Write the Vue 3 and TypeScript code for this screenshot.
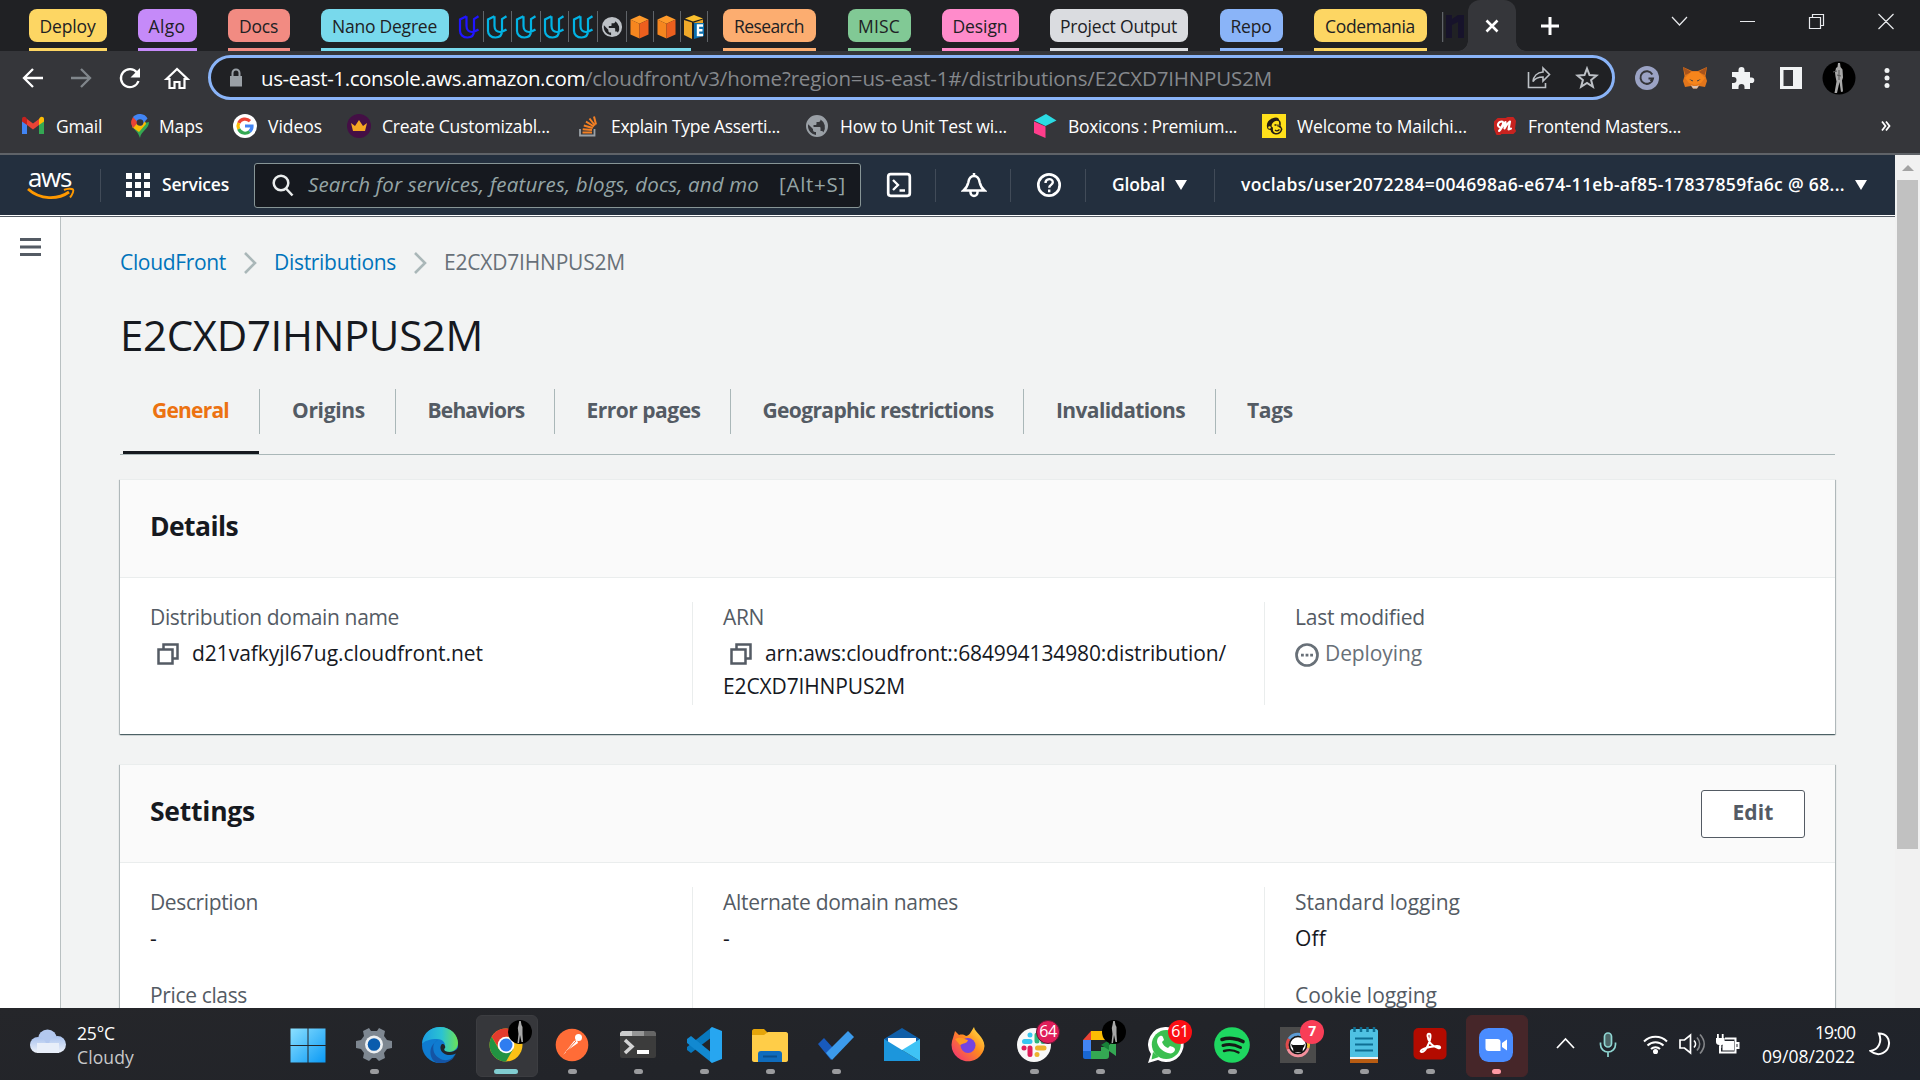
<script setup lang="ts">
import type { Directive } from 'vue'

interface Bookmark { id: string; label: string; width: number }
interface Tab { label: string; width: number; text: number; active?: boolean }

/* Tracks a label so that its text spans the given number of pixels. */
const vFit: Directive<HTMLElement, number> = {
  mounted(el, { value }) {
    const chars = (el.textContent ?? '').length
    const range = document.createRange()
    range.selectNodeContents(el)
    const natural = range.getBoundingClientRect().width
    el.style.letterSpacing = `${((value - natural) / chars).toFixed(3)}px`
  },
}

const leftGroups = [
  { id: 'deploy', label: 'Deploy', text: 56 },
  { id: 'algo', label: 'Algo', text: 37 },
  { id: 'docs', label: 'Docs', text: 39 },
]
const rightGroups = [
  { id: 'research', label: 'Research', text: 70 },
  { id: 'misc', label: 'MISC', text: 42 },
  { id: 'design', label: 'Design', text: 55 },
  { id: 'project', label: 'Project Output', text: 117 },
  { id: 'repo', label: 'Repo', text: 41 },
  { id: 'codemania', label: 'Codemania', text: 90 },
]
const bookmarks: Bookmark[] = [
  { id: 'gmail', label: 'Gmail', width: 46 },
  { id: 'maps', label: 'Maps', width: 44 },
  { id: 'google', label: 'Videos', width: 54 },
  { id: 'crown', label: 'Create Customizabl...', width: 168 },
  { id: 'stack', label: 'Explain Type Asserti...', width: 169 },
  { id: 'globe', label: 'How to Unit Test wi...', width: 167 },
  { id: 'box', label: 'Boxicons : Premium...', width: 169 },
  { id: 'chimp', label: 'Welcome to Mailchi...', width: 170 },
  { id: 'masters', label: 'Frontend Masters...', width: 153 },
]
const tabs: Tab[] = [
  { label: 'General', width: 140, text: 77, active: true },
  { label: 'Origins', width: 136, text: 73 },
  { label: 'Behaviors', width: 159, text: 97 },
  { label: 'Error pages', width: 176, text: 114 },
  { label: 'Geographic restrictions', width: 293, text: 231 },
  { label: 'Invalidations', width: 192, text: 129 },
  { label: 'Tags', width: 108, text: 46 },
]
const apps = ['windows', 'settings', 'edge', 'chrome', 'postman', 'terminal', 'vscode', 'files', 'todo', 'mail',
  'firefox', 'slack', 'meet', 'whatsapp', 'spotify', 'camera', 'notepad', 'acrobat', 'zoom']
const idle = ['windows', 'edge', 'mail', 'firefox']
const counts: Record<string, string> = { slack: '64', whatsapp: '61', camera: '7' }
</script>

<template>
  <div class="desktop">
    <header class="strip">
      <div v-for="g in leftGroups" :key="g.id" class="group" :class="g.id"><span class="pill"><span v-fit="g.text">{{ g.label }}</span></span></div>
      <div class="group nano">
        <span class="pill"><span v-fit="105">Nano Degree</span></span>
        <div class="minis">
          <span v-for="n in 5" :key="n" class="mini" :class="{ first: n === 1 }">
            <svg width="22" height="24" viewBox="0 0 22 24" fill="none" stroke-width="2.200"><path d="M8.500 1.200 2 4.500V16c0 3.500 3 6.500 7.500 6.500S16 20 16 16V4l4.500-2.800M8.500 1.200V11c0 4 2.500 6 5.500 6 2.500 0 4-1 6.500-2.500" /></svg>
          </span>
          <span class="mini wide"><svg width="22" height="22" viewBox="0 0 24 24"><path fill="#bdc1c6" d="M12 1a11 11 0 1 0 0 22 11 11 0 0 0 0-22m-1 19.900C6.500 20.400 3 16.600 3 12c0-.6.100-1.200.2-1.800L8 15v1c0 1.100.9 2 2 2h1zM18.400 18.400c-.3-.8-1-1.400-1.900-1.400h-1v-3c0-.6-.4-1-1-1h-6v-2h2c.6 0 1-.4 1-1V8h2c1.100 0 2-.9 2-2v-.4A9 9 0 0 1 18.400 18.400" /></svg></span>
          <span v-for="n in 2" :key="'c' + n" class="mini cube"><svg width="19" height="24" viewBox="0 0 20 24"><path fill="#ff9a2b" d="m10 0 9.500 4-9.500 4.500L.5 4z" /><path fill="#f6861f" d="M.5 4 10 8.500V24L.5 20z" /><path fill="#ec5f1e" d="M19.500 4 10 8.500V24l9.500-4z" /></svg></span>
          <span class="mini cube"><svg width="20" height="24" viewBox="0 0 20 24"><path fill="#fbc02d" d="m10 0 9 3.500L9 6.500 1 3.500z" /><path fill="#efa92a" d="m0 5 8 2.500V24l-8-4z" /><path fill="#e8a325" d="M9 8 19 4.500V8H9z" /><path fill="#0b6fae" d="M10 8h10v13l-10 3z" /><path fill="none" stroke="#fff" stroke-width="2.400" d="M19 10.500h-5v9.500h5M14 15.200h4.500" /></svg></span>
        </div>
      </div>
      <div v-for="g in rightGroups" :key="g.id" class="group" :class="g.id"><span class="pill"><span v-fit="g.text">{{ g.label }}</span></span></div>
      <svg class="ntab" width="26" height="32" viewBox="0 0 26 32"><path d="M.5 1v30" stroke="#5f6368" stroke-width="1.500" /><path fill="#17132b" d="M4 4h6v4l6-4h6v23h-6V11l-6 3v13H4z" /></svg>
      <div class="current"><svg width="14" height="14" viewBox="0 0 14 14"><path d="m1.500 1.500 11 11m0-11-11 11" stroke="#fff" stroke-width="2.600" /></svg></div>
      <svg class="plus" width="20" height="20" viewBox="0 0 20 20"><path d="M10 1v18M1 10h18" stroke="#fff" stroke-width="3" /></svg>
      <svg class="controls" width="224" height="20" viewBox="0 0 224 20" fill="none" stroke="#e8eaed" stroke-width="1.200"><path d="m1 5 7.500 8L16 5M69 9.500h15M138.500 5.500h11v11h-11zM141.500 5V2.500h11v11H150M207.500 2l15 15m0-15-15 15" /></svg>
    </header>

    <div class="toolbar">
      <svg class="nav-icons" width="168" height="24" viewBox="0 0 168 24" fill="none" stroke="#fff" stroke-width="2.300">
        <path d="M21 12H2m9-9-9 9 9 9" /><path stroke="#80868b" d="M49 12h19m-9-9 9 9-9 9" />
        <path d="M115 6.500A9 9 0 1 0 116.500 15" /><path fill="#fff" stroke="none" d="M118 2v9.500h-9.500z" />
        <path d="m144.500 13 10.500-10 10.500 10h-3v9h-5v-6h-5v6h-5v-9z" stroke-width="2.200" />
      </svg>
      <div class="omnibox">
        <svg class="lock" width="14" height="20" viewBox="0 0 14 20"><path fill="#9aa0a6" d="M1 8h12v10.500H1z" /><path d="M3.500 9V5a3.500 3.500 0 0 1 7 0v4" fill="none" stroke="#9aa0a6" stroke-width="2" /></svg>
        <span class="host" v-fit="324">us-east-1.console.aws.amazon.com</span><span class="path" v-fit="687">/cloudfront/v3/home?region=us-east-1#/distributions/E2CXD7IHNPUS2M</span>
        <svg class="share" width="24" height="24" viewBox="0 0 24 24" fill="none" stroke="#bdc1c6" stroke-width="1.600"><path d="M1.500 6v15.500h17V17M16 2l6.500 6.500L16 15v-4c-5 0-8 1.500-10 4.500.5-5 4-9 10-9.500z" /></svg>
        <svg class="star" width="24" height="24" viewBox="0 0 24 24" fill="none" stroke="#bdc1c6" stroke-width="2"><path d="m12 2.500 2.500 6.600 7 .4-5.400 4.500 1.800 6.800-5.900-3.900-5.900 3.900 1.800-6.800L2.500 9.500l7-.4z" /></svg>
      </div>
      <div class="extensions">
        <svg width="24" height="24" viewBox="0 0 24 24"><circle cx="12" cy="12" r="12" fill="#9ba3c4" /><path d="M17.300 8.500A6.300 6.300 0 1 0 18 12.500h-4.500M15.500 15.500l2.500-3" fill="none" stroke="#35363a" stroke-width="2" /></svg>
        <svg width="24" height="24" viewBox="0 0 24 24"><path fill="#e2761b" d="m0 1 9 4h6l9-4-1.500 9 1.500 5-2 6-6-1-2 2.500h-4L8 20l-6 1-2-6 1.500-5z" /><path fill="#a8541c" d="m0 1 8.500 5-6 3zM24 1l-8.500 5 6 3z" /><path fill="#f6851b" d="m8 6-6 6 4 5 6 2 6-2 4-5-6-6z" /><path fill="#233447" d="m6 13 4 1.500-.5 1zM18 13l-4 1.500.5 1zM10 20h4l-.5 1.500h-3z" /><path fill="#d7c1b3" d="m8 19 2 1h4l2-1-2 3.500h-4z" /></svg>
        <svg width="24" height="24" viewBox="0 0 24 24"><path fill="#f1f3f4" d="M1 6h6.500V4a3 3 0 0 1 6 0v2H19v5.500h1.500a2.800 2.800 0 0 1 0 5.600H19V23h-5.500v-2a3 3 0 0 0-6 0v2H1v-6h1.500a3 3 0 0 0 0-6H1z" /></svg>
        <svg width="24" height="24" viewBox="0 0 24 24"><path fill="#f1f3f4" fill-rule="evenodd" d="M1 1h22v22H1zm3.500 3v16H14V4z" /></svg>
        <svg class="avatar" width="34" height="34" viewBox="0 0 34 34"><circle cx="17" cy="17" r="16.500" fill="#000" /><path fill="#a8a8a8" d="M16 2h2l.5 4 2 2.500.5 8-1 3 1 11-2 .5-1.500-10-2.500 11h-2.500l2-11.500-1-5-.5-4 1-4.500 1.500-1z" /><path d="m11 11 4-1M17 9v10M15 14l4 1" stroke="#555" /></svg>
        <svg class="more" width="8" height="24" viewBox="0 0 8 24"><g fill="#f1f3f4"><circle cx="4" cy="4.500" r="2.500" /><circle cx="4" cy="12" r="2.500" /><circle cx="4" cy="19.500" r="2.500" /></g></svg>
      </div>
    </div>

    <nav class="bookmarks">
      <div v-for="b in bookmarks" :key="b.id" class="bookmark" :class="b.id">
        <svg width="24" height="24" viewBox="0 0 24 24">
          <g v-if="b.id === 'gmail'"><path fill="#4285f4" d="M1 6v14h5V10z" /><path fill="#34a853" d="M18 10v10h5V6z" /><path fill="#fbbc04" d="M18 5v6l5-3.500V5c0-2-2.500-3-4-1.500z" /><path fill="#ea4335" d="m6 5 6 4.600L18 5v6l-6 4.500L6 11z" /><path fill="#c5221f" d="M1 5v2.500L6 11V5L5 3.500C3.500 2 1 3 1 5" /></g>
          <g v-else-if="b.id === 'maps'"><path fill="#34a853" d="M4 12c2 4 6 5 8 12 1-7 9-9 9-16z" /><path fill="#fbbc04" d="m4 13 12-9 2 6-7 8z" /><path fill="#ea4335" d="M5 3 3.200 7c-.5 3 .5 4.500 2 7l6-7z" /><path fill="#4285f4" d="M5 3c4-4.500 12-4 14.500 1.500L13 12z" /><circle cx="12" cy="8.500" r="3.300" fill="#35363a" /></g>
          <g v-else-if="b.id === 'google'"><circle cx="12" cy="12" r="12" fill="#fff" /><g fill="none" stroke-width="3.200"><path stroke="#ea4335" d="M17 7.200A7 7 0 0 0 5.700 9" /><path stroke="#fbbc05" d="M5.700 9a7 7 0 0 0 0 6" /><path stroke="#34a853" d="M5.700 15a7 7 0 0 0 11 2.500" /><path stroke="#4285f4" d="M16.700 17.500A7 7 0 0 0 19 12h-7" /></g></g>
          <g v-else-if="b.id === 'crown'"><circle cx="12" cy="12" r="12" fill="#440f45" /><path fill="#f5a623" d="m4 9 4 3 4-6 4 6 4-3-2 8H6z" /></g>
          <g v-else-if="b.id === 'stack'" fill="none"><path stroke="#9aa0a6" stroke-width="1.800" d="M4 15v6.500h14.500V15" /><path stroke="#f48024" stroke-width="2" d="M6.500 18.500H16M6.700 15.200l9.300.8M7.800 11.500l9 2.500M10 7.700l8 4.800M13.500 4.500l5.500 7M18 2.500l2 8" /></g>
          <path v-else-if="b.id === 'globe'" fill="#9aa0a6" d="M12 1a11 11 0 1 0 0 22 11 11 0 0 0 0-22m-1 19.900C6.500 20.400 3 16.600 3 12c0-.6.100-1.200.2-1.800L8 15v1c0 1.100.9 2 2 2h1zM18.400 18.400c-.3-.8-1-1.400-1.900-1.400h-1v-3c0-.6-.4-1-1-1h-6v-2h2c.6 0 1-.4 1-1V8h2c1.100 0 2-.9 2-2v-.4A9 9 0 0 1 18.400 18.400" />
          <g v-else-if="b.id === 'box'"><path fill="#2bdbe3" d="m13 0 10.500 6.500-11 5.500L1 6.500z" /><path fill="#ff3d8b" d="m1 7.500 11.500 5V24L1 19z" /></g>
          <g v-else-if="b.id === 'chimp'"><path fill="#ffe01b" d="M0 0h24v24H0z" /><path fill="#241c15" d="M5 13C4 8 8 4 14 3.500c2 0 3 1 3 2.500 2 1 2 4 1.500 6 1 .5 1 2 2 3-1 4-4 6-7 5.500-3-.3-4.500-2-5-4.500-2 0-3.500-1-3.500-3" /><path fill="#ffe01b" d="M10 10c2-3 5-4 7-2.500l.3 4.500-1.300.5 2.800 2c.2 3-2.800 5-5.300 4.500-2.500-.5-3-3-2.500-5.500-1 0-2-1-1-3.500" /><circle cx="7.500" cy="13.500" r="1.300" fill="#ffe01b" /><path stroke="#241c15" stroke-width="1.300" fill="none" d="M12.500 11h2M16 10.500v2M13 16c1.500 1.500 3 1 4.500-.5M7 8.500c2-2 4-3 7-3" /></g>
          <g v-else><path fill="#c8231f" stroke="#c8231f" stroke-width="2" stroke-linejoin="round" d="M5 5h8l2-1h5l2 3-1 8 1 2-2 2H8l-1 1H4l-2-5V8z" /><path fill="none" stroke="#fff" stroke-width="2.100" stroke-linecap="round" stroke-linejoin="round" d="M6.500 13C3.500 12 5 7.500 9 7.500c2.500 0 .5 5-3 9.500 2-1 4-6.500 6.500-9l-1 6.500c2-3.500 3.500-6 5.500-7l-1.500 8c1 0 1.500-.5 2.500-1" /></g>
        </svg>
        <span v-fit="b.width">{{ b.label }}</span>
      </div>
      <svg class="overflow" width="10" height="12" viewBox="0 0 10 12"><path d="m1 1.500 3.500 4.500L1 10.500M5 1.500 8.500 6 5 10.500" fill="none" stroke="#fff" stroke-width="1.800" /></svg>
    </nav>

    <div class="viewport">
      <div class="page">
        <div class="aws-bar">
          <div class="logo">
            <span v-fit="43">aws</span>
            <svg width="48" height="14" viewBox="0 0 48 14"><path d="M1 2c12 11 30 11 41 3" fill="none" stroke="#f90" stroke-width="2.800" /><path d="M37 3c3-1.500 8-1.500 9-.5s-.5 5-3 8" fill="none" stroke="#f90" stroke-width="2" /></svg>
          </div>
          <i class="rule r1"></i>
          <svg class="apps-grid" width="24" height="24" viewBox="0 0 24 24" fill="#fff"><path d="M0 0h6v6H0zm9 0h6v6H9zm9 0h6v6h-6zM0 9h6v6H0zm9 0h6v6H9zm9 0h6v6h-6zM0 18h6v6H0zm9 0h6v6H9zm9 0h6v6h-6z" /></svg>
          <span class="services" v-fit="67">Services</span>
          <div class="search">
            <svg width="22" height="23" viewBox="0 0 22 23" fill="none" stroke="#eaeded" stroke-width="2.500"><circle cx="9" cy="9" r="7.300" /><path d="m14 14.500 6.500 7" /></svg>
            <em v-fit="451">Search for services, features, blogs, docs, and mo</em>
            <span v-fit="67">[Alt+S]</span>
          </div>
          <svg class="shell" width="26" height="26" viewBox="0 0 26 26" fill="none" stroke="#fff" stroke-width="2.700"><rect x="2.200" y="2.200" width="21.600" height="21.600" rx="2.500" /><path d="m7 8 5 5-5 5M13.500 18.500H19" stroke-width="2.300" /></svg>
          <i class="rule r2"></i>
          <svg class="bell" width="26" height="26" viewBox="0 0 26 26" fill="none" stroke="#fff" stroke-width="2.500"><path d="M2.500 18.500C5.500 16 6.500 14 7.300 10.500 8 6 10 4 13 4s5 2 5.700 6.500c.8 3.500 1.800 5.500 4.800 8zM13 4V1M9.500 19.500v1a3.500 3.500 0 0 0 7 0v-1" /></svg>
          <i class="rule r3"></i>
          <svg class="help" width="26" height="26" viewBox="0 0 26 26" fill="none" stroke="#fff" stroke-width="2.700"><circle cx="13" cy="13" r="10.700" /><path d="M9.500 11c0-5 7.300-5 7.300-.8 0 2.700-3.600 2.600-3.600 5.500M13.200 17.500v2.700" stroke-width="2.400" /></svg>
          <i class="rule r4"></i>
          <span class="region" v-fit="53">Global</span><i class="caret"></i>
          <i class="rule r5"></i>
          <span class="account" v-fit="604">voclabs/user2072284=004698a6-e674-11eb-af85-17837859fa6c @ 68...</span><i class="caret"></i>
        </div>

        <div class="body">
          <aside><svg width="22" height="18" viewBox="0 0 22 18"><path fill="#545b64" d="M0 0h21v3H0zm0 7.500h21v3H0zM0 15h21v3H0z" /></svg></aside>
          <main>
            <div class="crumbs">
              <a v-fit="106">CloudFront</a>
              <svg width="14" height="22" viewBox="0 0 14 22"><path d="m2 1 10 10L2 21" fill="none" stroke="#aab7b8" stroke-width="2.600" /></svg>
              <a class="second" v-fit="122">Distributions</a>
              <svg width="14" height="22" viewBox="0 0 14 22"><path d="m2 1 10 10L2 21" fill="none" stroke="#aab7b8" stroke-width="2.600" /></svg>
              <span v-fit="181">E2CXD7IHNPUS2M</span>
            </div>
            <h1><span v-fit="363">E2CXD7IHNPUS2M</span></h1>
            <div class="tabs">
              <div v-for="t in tabs" :key="t.label" class="tab" :class="{ active: t.active }" :style="{ width: t.width + 'px' }"><span v-fit="t.text">{{ t.label }}</span></div>
            </div>

            <section class="card details">
              <div class="card-head"><h2 v-fit="88">Details</h2></div>
              <div class="columns">
                <div class="col">
                  <label v-fit="249">Distribution domain name</label>
                  <p><svg class="copy" width="22" height="22" viewBox="0 0 22 22" fill="none" stroke="#545b64" stroke-width="2.500"><path d="M1.500 6.500h14v14h-14zM6.500 6V1.500h14v14H16" /></svg><span v-fit="291">d21vafkyjl67ug.cloudfront.net</span></p>
                </div>
                <div class="col">
                  <label v-fit="41">ARN</label>
                  <p><svg class="copy" width="22" height="22" viewBox="0 0 22 22" fill="none" stroke="#545b64" stroke-width="2.500"><path d="M1.500 6.500h14v14h-14zM6.500 6V1.500h14v14H16" /></svg><span v-fit="461">arn:aws:cloudfront::684994134980:distribution/</span></p>
                  <p class="wrap"><span v-fit="182">E2CXD7IHNPUS2M</span></p>
                </div>
                <div class="col">
                  <label v-fit="130">Last modified</label>
                  <p class="pending"><svg width="24" height="24" viewBox="0 0 24 24"><circle cx="12" cy="12" r="10.500" fill="none" stroke="#687078" stroke-width="2.700" /><path fill="#687078" d="M6 10.700h2.800v2.800H6zm4.600 0h2.800v2.800h-2.800zm4.600 0H18v2.800h-2.800z" /></svg><span v-fit="97">Deploying</span></p>
                </div>
              </div>
            </section>

            <section class="card settings-card">
              <div class="card-head"><h2 v-fit="105">Settings</h2><button><span v-fit="41">Edit</span></button></div>
              <div class="columns">
                <div class="col"><label v-fit="108">Description</label><p>-</p><label class="later" v-fit="97">Price class</label></div>
                <div class="col"><label v-fit="235">Alternate domain names</label><p>-</p></div>
                <div class="col"><label v-fit="165">Standard logging</label><p><span v-fit="31">Off</span></p><label class="later" v-fit="142">Cookie logging</label></div>
              </div>
            </section>
          </main>
        </div>
      </div>
      <div class="scrollbar"><i class="up"></i><i class="thumb"></i></div>
    </div>

    <footer class="taskbar">
      <div class="weather">
        <svg width="38" height="26" viewBox="0 0 38 26"><defs><linearGradient id="cl" x2="0" y2="1"><stop stop-color="#a9c2ee" /><stop offset="1" stop-color="#eef2fa" /></linearGradient></defs><circle cx="18.500" cy="10" r="9.500" fill="#b3c8ef" /><circle cx="9" cy="16" r="8" fill="url(#cl)" /><circle cx="28.500" cy="15.500" r="8.500" fill="url(#cl)" /><path fill="#e8eef9" d="M8 14h22v10H8z" /></svg>
        <div><span v-fit="38">25°C</span><span class="sky" v-fit="57">Cloudy</span></div>
      </div>
      <div class="apps">
        <div v-for="a in apps" :key="a" class="app" :class="[a, { idle: idle.includes(a) }]">
          <svg width="36" height="36" viewBox="0 0 36 36">
            <g v-if="a === 'windows'"><defs><linearGradient id="w" x2="1" y2="1"><stop stop-color="#8be0ff" /><stop offset="1" stop-color="#0a99f5" /></linearGradient></defs><path fill="url(#w)" d="M.5 1.500h17V18H.5zm18 0h17V18h-17zM.5 19h17v16.500H.5zm18 0h17v16.500h-17z" /></g>
            <g v-else-if="a === 'settings'"><path fill="#7e8791" d="m13 1 2 3h6l2-3 6 3-1 5 3 4 5 1v7l-5 1-3 4 1 5-6 3-3-3h-4l-3 3-6-3 1-5-3-4-5-1v-7l5-1 3-4-1-5z" /><circle cx="18" cy="17.500" r="9" fill="#eef0f2" /><circle cx="18" cy="17.500" r="6.300" fill="#0b5cad" /></g>
            <g v-else-if="a === 'edge'"><defs><linearGradient id="e" x2="1"><stop stop-color="#1b9de2" /><stop offset=".55" stop-color="#2bc3d2" /><stop offset="1" stop-color="#6be257" /></linearGradient></defs><circle cx="18" cy="18" r="18" fill="#0f7bd0" /><path fill="url(#e)" d="M0 17C1 5 10 0 18 0c11 0 18 8 18 16 0 6-5 9-9 9-5 0-7-2-5-4 3-4-1-9-7-9-7 0-13 2-15 5" /><path fill="#1454a4" d="M16 13c-6 2-7 13 1 18 6 4 12 2 16-2-3 5-10 8-17 7C8 35 4 20 16 13" /><path fill="#222428" d="M20 17c-4 4 0 11 8 11 3 0 6-1 7.500-2.500L37 19c-2 4-6 6-9 6-5 0-7-2-5-4 1-1.500-1-4-2-4" /></g>
            <g v-else-if="a === 'chrome'"><circle cx="18" cy="18" r="16.500" fill="#fbc116" /><path fill="#e33b2e" d="M3.700 9.800A16.500 16.500 0 0 1 32.300 9.800H18l-7 12z" /><path fill="#229342" d="M3.700 9.800A16.500 16.500 0 0 0 18 34.500l7.200-12.400-14.400 0z" /><circle cx="18" cy="18" r="8.300" fill="#fff" /><circle cx="18" cy="18" r="6.500" fill="#2f7df0" /></g>
            <g v-else-if="a === 'postman'"><circle cx="18" cy="18" r="16.300" fill="#ff6c37" /><path d="m9 28 11-14 3-1 1 3-10 7z" fill="#fff" /><circle cx="24.500" cy="10.500" r="3.500" fill="#fff" /><path d="m12 25 10-11" stroke="#ff6c37" /></g>
            <g v-else-if="a === 'terminal'"><rect y="4" width="36" height="27" rx="2" fill="#3c3c3c" /><path fill="#ccc" d="M2 4h10v5H0V6z" /><path fill="#969696" d="M12 4h12v5H12z" /><path fill="#666" d="M24 4h10l2 2v3H24z" /><path d="m5 13 7 6.500L5 26" fill="none" stroke="#d5d5d5" stroke-width="3.500" /><path fill="#fff" d="M17 23h12v4H17z" /></g>
            <g v-else-if="a === 'vscode'"><path fill="#0879bf" d="M26 0v10L5 26l-4-3v-3z" /><path fill="#1289d1" d="m1 12 4-3 21 17v10L1 16z" /><path fill="#27a6f0" d="m26 0 10 4v28l-10 4-2-2V2z" /></g>
            <g v-else-if="a === 'files'"><path fill="#e5a50a" d="M0 4c0-1 1-2 2-2h10l4 4h18v10H0z" /><path fill="#ffcd48" d="M0 8h12l4-3h18c1 0 2 1 2 2v26c0 1-1 2-2 2H2c-1 0-2-1-2-2z" /><path fill="#0f6cbd" d="M6 35V27c0-2 1-3 3-3h18c2 0 3 1 3 3v8z" /><path d="M11 29.500h14" stroke="#0a4f8c" stroke-width="2" /></g>
            <g v-else-if="a === 'todo'"><path fill="#185abd" d="m0 17 6-6 9 10-2 12z" /><path fill="#3c9bec" d="M30 4 36 10 14 33 8 26z" /></g>
            <g v-else-if="a === 'mail'"><path fill="#0f5ea8" d="m0 12 18-11 18 11v5H0z" /><path fill="#fff" d="M4 11h28v12H4z" /><path fill="#1c96dc" d="m0 12 36 22H0z" /><path fill="#3fc3f5" d="M36 12v22L18 23z" /></g>
            <g v-else-if="a === 'firefox'"><defs><linearGradient id="f" x1="1" x2="0" y2="1"><stop stop-color="#fff04a" /><stop offset=".45" stop-color="#ff8a1f" /><stop offset="1" stop-color="#f0257f" /></linearGradient></defs><path fill="url(#f)" d="M24 0c1 6 10 9 10.500 19A16.500 16.500 0 1 1 3 11l2-7 4 4c3-1 6 0 7 1 3 0 5-4 8-9" /><circle cx="18" cy="18.500" r="7.500" fill="#7543e0" /><path fill="#ff9a22" d="M5 12c6-3 9 0 13 1-1 4-5 3-8 5z" /></g>
            <g v-else-if="a === 'slack'"><circle cx="18" cy="18" r="17" fill="#f8f8f8" /><g stroke-width="5" stroke-linecap="round"><path stroke="#36c5f0" d="M8.500 14.500H14M14 8v.1" /><path stroke="#2eb67d" d="M21 8v6M27 14.500h.1" /><path stroke="#ecb22e" d="M21.500 21H28M21 27.500v.1" /><path stroke="#e01e5a" d="M14 21v6.500M8 21h.1" /></g></g>
            <g v-else-if="a === 'meet'"><path fill="#ea4335" d="m1 13 8-9v9z" /><path fill="#fbbc04" d="M9 4h17v9H9z" /><path fill="#4285f4" d="M1 13h8v11H1z" /><path fill="#1967d2" d="M1 24h8v8H3c-1 0-2-1-2-2z" /><path fill="#34a853" d="M9 24h10v-4h8v9c0 2-1 3-3 3H9zM27 18l7-6v17l-7-5z" /><path fill="#188038" d="m19 18 8-5v10z" /></g>
            <g v-else-if="a === 'whatsapp'"><path fill="#fff" d="M18 0a17.500 17.500 0 1 1-8 33L0 36l3-9A17.500 17.500 0 0 1 18 0" /><circle cx="18.300" cy="17.500" r="14.500" fill="#3bbf50" /><path fill="#3bbf50" d="m5 25-1.500 7.500L11 30z" /><path fill="#fff" d="M12 9c2-1 3 0 4 4l-2 2c1 3 3 5 6 6l2-2c4 1 5 2 5 4-1 3-4 4-7 3-6-2-10-6-11-11 0-3 1-5 3-6" /></g>
            <g v-else-if="a === 'spotify'"><circle cx="18" cy="18" r="17.800" fill="#1ed760" /><path fill="none" stroke="#151b17" stroke-linecap="round" d="M8 12.500c6-2 15-1.500 21 2" stroke-width="3.600" /><path fill="none" stroke="#151b17" stroke-linecap="round" d="M9 18.500c6-2 12-1 17.500 2" stroke-width="3" /><path fill="none" stroke="#151b17" stroke-linecap="round" d="M10 24c5-1.500 10-1 14.500 1.500" stroke-width="2.400" /></g>
            <g v-else-if="a === 'camera'"><path fill="#4b4b4b" d="M0 0h36v36H0z" /><g fill="none" stroke-width="3"><path stroke="#5b9bd5" d="M9 12a10.500 10.500 0 0 1 17-1" /><path stroke="#f2c230" d="M26 11a10.500 10.500 0 0 1 2 10" /><path stroke="#f4909c" d="M28 21a10.500 10.500 0 0 1-20 1" /><path stroke="#e04a4a" d="M8 22a10.500 10.500 0 0 1 1-10" /></g><circle cx="18" cy="18" r="8.500" fill="#fff" stroke="#111" stroke-width="1.500" /><path fill="#111" d="m11 17 2 1h10l2-1-1 3-1 1-.5 4h-9l-.5-4-1-1z" /></g>
            <g v-else-if="a === 'notepad'"><path fill="#b85c12" d="M4 31h28v5H4z" /><path fill="#f4f4f4" d="M4 29h28v3H4z" /><path fill="#4fc1e2" d="M4 4c0-1 1-2 2-2h24c1 0 2 1 2 2v26H4z" /><path d="M9 11.500h18M9 17.500h18M9 23.500h18" stroke="#0e6f93" stroke-width="2" /><path d="M8.500 0v5M15 0v5M21.500 0v5M28 0v5" stroke="#0e6f93" stroke-width="2.500" /></g>
            <g v-else-if="a === 'acrobat'"><rect x="1.500" y="1" width="33" height="31.500" rx="5" fill="#b30b00" /><path d="M9 25c-2-2 5-5 16-6 4 0 4 3 1 2-5-1-10-6-10.500-12 0-3 3-3 3 0 0 5-5 17-9.500 16" fill="none" stroke="#fff" stroke-width="2" /></g>
            <g v-else><rect x="1" y="1" width="34" height="34" rx="9.500" fill="#4a8cff" /><path fill="#fff" d="M7.500 12h12c2 0 3 1 3 3v9h-12c-2 0-3-1-3-3zM24 16l5-3.500v11L24 20z" /></g>
          </svg>
          <svg v-if="a === 'chrome' || a === 'meet'" class="badge face" width="24" height="24" viewBox="0 0 24 24"><circle cx="12" cy="12" r="12" fill="#000" /><path fill="#a8a8a8" d="M11.200 1h1.600l.7 4 1 2v7l.5 8h-1.500L12 15l-1 8H9.500l1-9-.7-6 .7-3z" /></svg>
          <span v-if="counts[a]" class="badge">{{ counts[a] }}</span>
        </div>
      </div>
      <div class="tray">
        <svg class="icons" width="184" height="26" viewBox="0 0 184 26" fill="none" stroke="#fff" stroke-width="1.700">
          <path d="m1 17 8.500-9L18 17" />
          <g stroke="#8fd6d2"><rect x="48.500" y="2" width="7" height="14" rx="3.500" fill="#4c6566" /><path d="M44.500 11.500v2a7.500 7.500 0 0 0 15 0v-2M52 21v5" /></g>
          <path d="M88 10.500a16.500 16.500 0 0 1 23 0M91.500 14.500a11.500 11.500 0 0 1 16 0M95 18a6.500 6.500 0 0 1 9 0" stroke-width="2" /><circle cx="99.500" cy="20.500" r="1.700" fill="#fff" />
          <path d="M124 9h4.500l6-5v18l-6-5H124zM138 9.500c2 2 2 5 0 7" /><path stroke="#85878a" d="M141 6.500c3.500 4 3.500 9 0 13M144 3.500c5.500 6 5.500 13 0 19" />
          <path d="M169 7.500h10.500v14H164V15M179.500 12h3v5h-3" stroke-width="2" /><path fill="#fff" stroke="none" d="M168 10h10v9.500h-11.500V15zM161 3h1.800v4h3V3h1.800v4h1v4c0 2-1.500 3-3.300 3v3h-2v-3c-1.800 0-3.300-1-3.300-3V7h1z" />
        </svg>
        <div class="clock"><span v-fit="40">19:00</span><span v-fit="93">09/08/2022</span></div>
        <svg class="moon" width="22" height="24" viewBox="0 0 22 24"><path d="M10 1.500c8 0 10.500 6 10 10.500-.6 8-10 14-18.500 7 8-1.500 12-9 8.500-17.500z" fill="none" stroke="#fff" stroke-width="2" /></svg>
      </div>
    </footer>
  </div>
</template>

<style>
body { margin: 0; overflow: hidden; background: #202124; }
</style>

<style scoped>
* { box-sizing: border-box; }
.desktop { width: 1920px; height: 1080px; display: flex; flex-direction: column; overflow: hidden; font-family: "Open Sans", "Noto Sans", sans-serif; }
.desktop span, .desktop em, .desktop a, .desktop label, .desktop h2 { white-space: nowrap; }
svg { display: block; flex: none; }

.strip { height: 51px; flex: none; background: #202124; display: flex; align-items: flex-start; color: #202124; font-size: 17.5px; }
.group { height: 51px; flex: none; padding-top: 9px; display: flex; background: linear-gradient(var(--c), var(--c)) bottom / 100% 3px no-repeat; }
.pill { height: 33px; width: 100%; border-radius: 8px; background: var(--c); display: flex; align-items: center; justify-content: center; padding-right: 1px; }
.deploy { --c: #fdd663; width: 78px; margin-left: 29px; }
.algo { --c: #c58af9; width: 59px; margin-left: 31px; }
.docs { --c: #f28b82; width: 62px; margin-left: 31px; }
.nano { --c: #78d9ec; width: 370px; margin-left: 31px; }
.nano .pill { width: 128px; flex: none; }
.research { --c: #fcad70; width: 93px; margin-left: 32px; }
.misc { --c: #81c995; width: 63px; margin-left: 32px; }
.design { --c: #ff8bcb; width: 77px; margin-left: 31px; }
.project { --c: #dadce0; width: 138px; margin-left: 31px; }
.repo { --c: #8ab4f8; width: 63px; margin-left: 32px; }
.codemania { --c: #fdd663; width: 113px; margin-left: 31px; }
.minis { display: flex; margin: 2px 0 0 6px; height: 31px; }
.mini { width: 28.500px; flex: none; display: flex; align-items: center; justify-content: center; border-right: 1.500px solid #5f6368; }
.mini svg { stroke: #02b3e4; }
.mini.first svg { stroke: #2015ff; }
.mini.wide { width: 29px; }
.mini.wide svg, .mini.cube svg { stroke: none; }
.mini.cube { width: 27px; }
.ntab { margin: 11px 0 0 15px; }
.current { width: 48px; height: 51px; border-radius: 12px 12px 0 0; background: #35363a; display: flex; align-items: center; justify-content: center; position: relative; }
.current::before, .current::after { content: ""; position: absolute; bottom: 0; width: 10px; height: 10px; }
.current::before { left: -10px; background: radial-gradient(circle at 0 0, transparent 9.500px, #35363a 10px); }
.current::after { right: -10px; background: radial-gradient(circle at 100% 0, transparent 9.500px, #35363a 10px); }
.plus { margin: 16px 0 0 24px; }
.controls { margin: 12px 0 0 111px; }

.toolbar { height: 51px; flex: none; background: #35363a; display: flex; align-items: flex-start; }
.nav-icons { margin: 15px 0 0 22px; }
.omnibox { margin: 4px 0 0 18px; width: 1407px; height: 45px; flex: none; border: 3px solid #8ab4f8; border-radius: 23px; background: #202124; display: flex; align-items: center; font-size: 20.500px; }
.lock { margin-left: 18px; }
.host { color: #fff; margin-left: 18px; width: 324px; }
.path { color: #85888c; width: 687px; }
.share { margin-left: 255px; }
.star { margin-left: 24px; }
.extensions { display: flex; align-items: center; gap: 24px; height: 51px; margin-left: 20px; padding-top: 2px; }
.extensions .avatar { margin-left: -5px; }
.extensions .more { margin-left: 3px; }

.bookmarks { height: 53px; flex: none; background: #35363a; border-bottom: 2px solid #5f6368; display: flex; align-items: center; color: #fff; font-size: 17.500px; padding-bottom: 3px; }
.bookmark { display: flex; align-items: center; flex: none; height: 30px; }
.gmail { width: 107px; margin-left: 21px; }
.maps { width: 105px; }
.google { width: 114px; }
.crown { width: 229px; }
.stack { width: 229px; }
.globe { width: 228px; }
.box { width: 229px; }
.chimp { width: 231px; }
.masters { width: 386px; }
.bookmark span { margin-left: 11px; padding-bottom: 1px; }
.maps span { margin-left: 7px; }
.overflow { margin-left: 2px; }

.viewport { height: 853px; flex: none; display: flex; overflow: hidden; }
.page { width: 1895px; height: 853px; display: flex; flex-direction: column; overflow: hidden; background: #f2f3f3; }
.aws-bar { height: 60px; flex: none; background: #232f3e; display: flex; align-items: center; color: #fff; font-size: 17.500px; font-weight: 600; }
.aws-bar > span, .search em, .search span { padding-bottom: 2px; }
.logo { width: 48px; margin-left: 27px; height: 30px; }
.logo span { display: block; font-size: 26px; font-weight: 500; line-height: 20px; height: 15px; margin: -3px 0 5px 1px; }
.rule { width: 1px; height: 33px; background: #414b58; flex: none; }
.r1 { margin-left: 25px; }
.apps-grid { margin-left: 25px; }
.services { margin-left: 12px; width: 67px; }
.search { width: 607px; height: 45px; margin-left: 25px; flex: none; border: 1px solid #879596; border-radius: 3px; background: #16191f; display: flex; align-items: center; color: #95a5a6; font-weight: 400; font-size: 20.500px; }
.search svg { margin-left: 17px; }
.search em { width: 451px; margin-left: 14px; }
.search span { margin-left: 20px; }
.shell { margin-left: 25px; }
.r2 { margin-left: 23px; }
.bell { margin-left: 25px; }
.r3 { margin-left: 23px; }
.help { margin-left: 25px; }
.r4 { margin-left: 23px; }
.region { width: 53px; margin-left: 26px; }
.caret { width: 0; height: 0; margin-left: 10px; border: 6px solid transparent; border-top: 10px solid #fff; border-bottom: 0; }
.r5 { margin-left: 27px; }
.account { width: 604px; margin-left: 26px; }

.body { flex: 1; display: flex; border-top: 1px solid #fff; min-height: 0; box-shadow: inset 0 1px 0 #545b64; }
aside { width: 61px; flex: none; background: #fff; border-right: 1px solid #b9c0c1; margin-top: 1px; padding: 21px 0 0 20px; }
main { width: 1715px; margin-left: 59px; padding-top: 31px; flex: none; }
.crumbs { height: 32px; display: flex; align-items: center; font-size: 21px; color: #687078; }
.crumbs a { color: #0073bb; width: 106px; }
.crumbs a, .crumbs span { padding-bottom: 2px; }
.crumbs a.second { width: 122px; }
.crumbs svg { margin: 0 17px; }
h1 { margin: 31px 0 29px; height: 50px; line-height: 50px; font-size: 42px; font-weight: 400; color: #16191f; }
.tabs { height: 66px; display: flex; border-bottom: 1px solid #aab7b8; font-size: 21px; font-weight: 700; color: #545b64; }
.tab { height: 45px; flex: none; border-right: 1px solid #aab7b8; display: flex; align-items: center; justify-content: center; padding: 0 0 4px 2px; }
.tab:last-child { border-right: 0; padding-left: 0; }
.tab.active { color: #ec7211; position: relative; }
.tab.active::after { content: ""; position: absolute; left: 3px; right: 0; top: 62px; height: 3px; background: #16191f; }
.card { background: #fff; border-top: 1px solid #eaeded; box-shadow: 0 1px 1px rgba(0, 28, 36, .5), 1px 1px 1px rgba(0, 28, 36, .2), -1px 1px 1px rgba(0, 28, 36, .2); }
.details { margin-top: 24px; height: 255px; }
.settings-card { margin-top: 30px; height: 400px; }
.card-head { height: 98px; background: #fafafa; border-bottom: 1px solid #eaeded; display: flex; align-items: center; justify-content: space-between; padding: 0 30px 6px; }
h2 { margin: 0; font-size: 26.500px; font-weight: 700; color: #16191f; }
button { width: 104px; height: 48px; margin-top: 6px; border: 1px solid #545b64; border-radius: 3px; background: #fff; font: 700 21px "Open Sans", sans-serif; color: #545b64; padding: 0 0 3px; }
.columns { display: flex; padding-top: 24px; }
.col { flex: none; width: 572px; height: 103px; padding-left: 30px; border-left: 1px solid #eaeded; font-size: 21px; color: #16191f; }
.col:first-child { border-left: 0; width: 572px; }
.settings-card .col { height: 300px; }
label { display: block; line-height: 32px; height: 32px; margin-top: -1px; color: #545b64; width: max-content; }
.col p { margin: 4px 0 0; height: 32px; display: flex; align-items: center; }
.col p.wrap { margin-top: 1px; }
.copy { margin: 2px 13px 0 7px; }
.pending { color: #687078; }
.pending svg { margin: 3px 6px 0 0; }
.later { margin-top: 25px; }
.scrollbar { width: 25px; background: #f1f1f1; display: flex; flex-direction: column; align-items: center; }
.up { margin-top: 10px; border: 6px solid transparent; border-top: 0; border-bottom: 6px solid #a3a3a3; }
.thumb { margin-top: 9px; width: 21px; height: 669px; background: #c1c1c1; }

.taskbar { height: 72px; flex: none; background: linear-gradient(175deg, #25262a, #222429 50%, #1f232b); display: flex; color: #fff; font-size: 17.500px; }
.weather { width: 275px; height: 72px; display: flex; align-items: center; padding: 0 0 4px 29px; }
.weather > svg { margin-right: 10px; }
.weather div { display: flex; flex-direction: column; line-height: 24px; padding-top: 5px; }
.sky { color: #c8c9ca; }
.apps { display: flex; }
.app { width: 66px; height: 72px; display: flex; align-items: center; justify-content: center; position: relative; }
.app > svg { margin-top: 2px; position: relative; }
.app::before { content: ""; position: absolute; left: 29px; bottom: 6px; width: 9px; height: 5px; border-radius: 3px; background: #9a9b9e; z-index: 1; }
.app.idle::before { display: none; }
.app.chrome::before { left: 21px; width: 24px; background: #81cdd1; }
.app.zoom::before { background: #ff99a4; }
.app.chrome::after, .app.zoom::after { content: ""; position: absolute; left: 3px; top: 7px; width: 60px; height: 60px; border-radius: 6px; background: #36373b; border: 1px solid #3c3d41; }
.app.zoom::after { background: #462629; border-color: #462629; }
.app.chrome > svg, .app.zoom > svg { z-index: 1; }
.app > svg.face, .badge { position: absolute; left: 35px; top: 12px; margin: 0; }
.badge { z-index: 2; }
span.badge { width: 24px; height: 24px; border-radius: 12px; font-size: 16px; line-height: 23px; text-align: center; background: #fb0f14; letter-spacing: -.5px; }
.slack span.badge { background: #e01e5a; border: 1px solid #5d1734; line-height: 21px; }
.camera span.badge { background: #f93e57; font-size: 14px; font-weight: 700; line-height: 21px; }
.tray { display: flex; align-items: flex-start; }
.icons { margin: 23px 0 0 27px; }
.clock { width: 115px; margin-top: 12px; display: flex; flex-direction: column; align-items: flex-end; line-height: 24px; }
.moon { margin: 24px 0 0 14px; }
</style>
